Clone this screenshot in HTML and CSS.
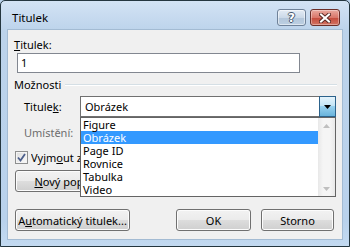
FILE: index.html
```html
<!DOCTYPE html>
<html lang="cs">
<head>
    <meta charset="UTF-8">
    <title>Titulek</title>
    <link rel="stylesheet" href="styles.css">
</head>
<body>

    <div class="window">

        <div class="titlebar">
            <span class="title">Titulek</span>
            <div class="caption-btns">
                <div class="cap-btn help"><span>?</span></div>
                <div class="cap-btn close">
                    <svg width="12" height="10" viewBox="0 0 12 10">
                        <path d="M2 1.5 L10 8.5 M10 1.5 L2 8.5" stroke="#5a2a26" stroke-width="4" stroke-linecap="square"/>
                        <path d="M2 1.5 L10 8.5 M10 1.5 L2 8.5" stroke="#ffffff" stroke-width="2" stroke-linecap="square"/>
                    </svg>
                </div>
            </div>
        </div>

        <div class="client">
            <div class="field-label"><u>T</u>itulek:</div>
            <div class="textbox">1</div>

            <div class="group-head">
                <span>Možnosti</span>
                <span class="rule"></span>
            </div>

            <div class="combo-row">
                <span class="combo-label">Titule<u>k</u>:</span>
                <div class="combo">
                    <span class="combo-value">Obrázek</span>
                    <span class="combo-btn">
                        <svg width="7" height="4" viewBox="0 0 7 4"><path d="M0 0 H7 L3.5 4 Z" fill="#000"/></svg>
                    </span>

                    <!-- open drop-down list lies over the rows below -->
                    <div class="dropdown">
                        <ul class="dropdown-items">
                            <li>Figure</li>
                            <li class="selected">Obrázek</li>
                            <li>Page ID</li>
                            <li>Rovnice</li>
                            <li>Tabulka</li>
                            <li>Video</li>
                        </ul>
                        <div class="scrollbar">
                            <svg width="7" height="4" viewBox="0 0 7 4"><path d="M0 4 H7 L3.5 0 Z" fill="#bfbfbf"/></svg>
                            <svg width="7" height="4" viewBox="0 0 7 4"><path d="M0 0 H7 L3.5 4 Z" fill="#bfbfbf"/></svg>
                        </div>
                    </div>
                </div>
            </div>

            <div class="combo-row position-row">
                <span class="combo-label disabled">Umístění:</span>
            </div>

            <!-- the rows below are partly covered by the open list -->
            <div class="check-row">
                <span class="checkbox">
                    <svg width="9" height="9" viewBox="0 0 9 9"><path d="M1 4.5 L3.5 7.5 L8 1" fill="none" stroke="#4c5f8c" stroke-width="1.8"/></svg>
                </span>
                <span class="check-text">Vyjm<u>o</u>ut z titulku</span>
            </div>

            <div class="btn-row">
                <button class="btn btn-new"><u>N</u>ový popisek...</button>
            </div>

            <div class="footer">
                <button class="btn btn-auto">A<u>u</u>tomatický titulek...</button>
                <button class="btn btn-ok">OK</button>
                <button class="btn btn-cancel">Storno</button>
            </div>
        </div>

    </div>

</body>
</html>
```

FILE: styles.css
```css
/* Reset */
* {
    margin: 0;
    padding: 0;
    box-sizing: border-box;
}

html, body {
    width: 350px;
    height: 247px;
    overflow: hidden;
}

body {
    font-family: "Noto Sans", "Open Sans", sans-serif;
    font-size: 11px;
    line-height: 15px;
    color: #000;
    background: #b9d1ea;
}

u {
    text-decoration: underline;
    text-underline-offset: 1px;
}

/* Window frame */
.window {
    width: 350px;
    height: 247px;
    display: flex;
    flex-direction: column;
    border: 1px solid #24363f;
    border-radius: 5px 5px 0 0;
    padding: 0 7px 7px;
    background: linear-gradient(#d3e3f4, #bcd3eb 30px, #b9d2ec 220px, #c3daf1);
}

.titlebar {
    height: 29px;
    display: flex;
    align-items: flex-start;
    flex-shrink: 0;
}

.title {
    margin: 9px 0 0 4px;
    font-size: 11.5px;
}

.caption-btns {
    margin: 8px 2px 0 auto;
    display: flex;
    gap: 4px;
}

.cap-btn {
    width: 29px;
    height: 17px;
    border-radius: 3px;
    display: flex;
    align-items: center;
    justify-content: center;
}

.cap-btn.help {
    border: 1px solid #6f8299;
    background: linear-gradient(#e4ecf5, #cbd9e8 50%, #b3c6da 51%, #bccfe2);
    box-shadow: inset 0 0 0 1px rgba(255, 255, 255, 0.5);
}

.cap-btn.help span {
    font-family: "DejaVu Sans", sans-serif;
    font-weight: bold;
    font-size: 12px;
    line-height: 12px;
    color: #fff;
    text-shadow: -1px 0 #46586d, 1px 0 #46586d, 0 -1px #46586d, 0 1px #46586d;
}

.cap-btn.close {
    width: 30px;
    border: 1px solid #6b2e28;
    background: linear-gradient(#e9a99f, #d9776a 50%, #c44a3b 51%, #d27363);
    box-shadow: inset 0 0 0 1px rgba(255, 255, 255, 0.35);
}

/* Client area */
.client {
    flex: 1;
    display: flex;
    flex-direction: column;
    background: #f0f0f0;
    padding: 7px 0 8px;
    box-shadow: 0 0 0 1px #a3bbd3;
}

.field-label {
    margin-left: 6px;
}

.textbox {
    margin: 1px 0 0 9px;
    width: 283px;
    height: 20px;
    padding: 1px 3px;
    background: #fff;
    border: 1px solid #828790;
    line-height: 16px;
}

.group-head {
    margin: 4px 5px 0 6px;
    display: flex;
    align-items: center;
    gap: 4px;
}

.group-head .rule {
    flex: 1;
    height: 2px;
    border-top: 1px solid #d5dfe5;
    border-bottom: 1px solid #ffffff;
}

.combo-row {
    margin-top: 4px;
    height: 21px;
    display: flex;
    align-items: center;
    position: relative;
    z-index: 2;
}

.combo-label {
    width: 72px;
    padding-left: 16px;
}

.combo-label.disabled {
    color: #6d6d6d;
}

.position-row {
    margin-top: 5px;
    z-index: 1;
}

.combo {
    position: relative;
    width: 256px;
    height: 21px;
    display: flex;
    background: #fff;
    border: 1px solid #707070;
}

.combo-value {
    flex: 1;
    padding-left: 4px;
    line-height: 19px;
}

.combo-btn {
    width: 17px;
    margin: -1px -1px -1px 0;
    display: flex;
    align-items: center;
    justify-content: center;
    border: 1px solid #2c628b;
    background: linear-gradient(#e5f4fc, #c4e5f6 45%, #98d1ef 50%, #68b3db);
}

/* Open list */
.dropdown {
    position: absolute;
    left: -1px;
    top: 20px;
    width: 256px;
    height: 80px;
    display: flex;
    background: #fff;
    border: 1px solid #646464;
}

.dropdown-items {
    list-style: none;
    flex: 1;
}

.dropdown-items li {
    height: 13px;
    line-height: 13px;
    padding-left: 2px;
}

.dropdown-items li.selected {
    background: #3399ff;
    color: #fff;
}

.scrollbar {
    width: 17px;
    display: flex;
    flex-direction: column;
    align-items: center;
    justify-content: space-between;
    padding: 6px 0 5px;
    background: linear-gradient(90deg, #e8e8e8, #f5f5f5 30%, #f5f5f5 70%, #e9e9e9);
}

/* Checkbox */
.check-row {
    width: 73px;
    margin: 7px 0 0 7px;
    display: flex;
    align-items: center;
    gap: 3px;
    overflow: hidden;
    white-space: nowrap;
}

.checkbox {
    flex-shrink: 0;
    width: 13px;
    height: 13px;
    display: flex;
    align-items: center;
    justify-content: center;
    border: 1px solid #8e8f8f;
    background: linear-gradient(135deg, #dcdcdc, #fbfbfb);
    box-shadow: inset 0 0 0 1px #f4f4f4;
}

.check-text {
    overflow: hidden;
}

/* Buttons */
.btn {
    height: 22px;
    font-family: inherit;
    font-size: 11px;
    color: #000;
    border: 1px solid #707070;
    border-radius: 3px;
    background: linear-gradient(#f2f2f2, #ebebeb 50%, #dddddd 51%, #cfcfcf);
    box-shadow: inset 0 0 0 1px #fcfcfc;
    white-space: nowrap;
}

.btn-row {
    width: 73px;
    margin: 5px 0 0 7px;
    display: flex;
    overflow: hidden;
}

.btn-new {
    flex-shrink: 0;
    width: 117px;
}

.footer {
    margin: 17px 8px 0 7px;
    display: flex;
}

.btn-auto { width: 115px; }
.btn-ok { width: 75px; margin-left: auto; }
.btn-cancel { width: 73px; margin-left: 10px; }
```
